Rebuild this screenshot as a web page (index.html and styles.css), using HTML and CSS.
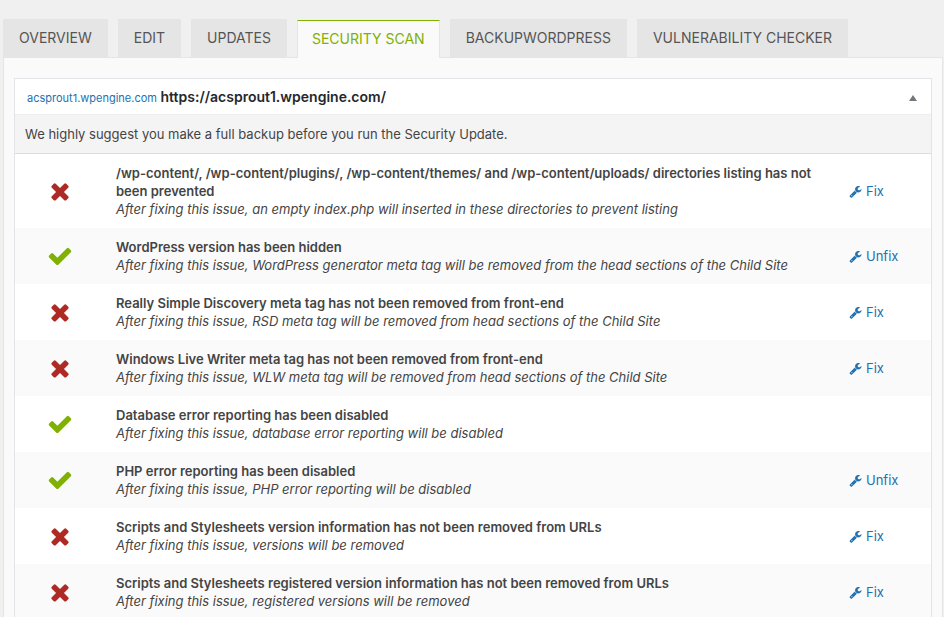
FILE: index.html
```html
<!DOCTYPE html>
<html lang="en">
<head>
  <meta charset="UTF-8">
  <meta name="viewport" content="width=device-width, initial-scale=1.0">
  <title>Security Scan</title>
  <link rel="stylesheet" href="styles.css">
</head>
<body>
  <svg class="sprite" aria-hidden="true">
    <symbol id="icon-check" viewBox="0 0 1792 1792">
      <path d="M1671 566q0 40-28 68l-724 724-136 136q-28 28-68 28t-68-28l-136-136-362-362q-28-28-28-68t28-68l136-136q28-28 68-28t68 28l294 295 656-657q28-28 68-28t68 28l136 136q28 28 28 68z"/>
    </symbol>
    <symbol id="icon-times" viewBox="0 0 1792 1792">
      <path d="M1490 1322q0 40-28 68l-136 136q-28 28-68 28t-68-28l-294-294-294 294q-28 28-68 28t-68-28l-136-136q-28-28-28-68t28-68l294-294-294-294q-28-28-28-68t28-68l136-136q28-28 68-28t68 28l294 294 294-294q28-28 68-28t68 28l136 136q28 28 28 68t-28 68l-294 294 294 294q28 28 28 68z"/>
    </symbol>
    <symbol id="icon-wrench" viewBox="0 0 1792 1792">
      <path d="M448 1472q0-26-19-45t-45-19-45 19-19 45 19 45 45 19 45-19 19-45zm644-420l-682 682q-37 37-90 37-52 0-91-37l-106-108q-38-36-38-90 0-53 38-91l681-681q39 98 114.500 173.500t173.500 114.500zm634-435q0 39-23 106-47 134-164.500 217.500t-258.500 83.500q-185 0-316.500-131.500t-131.500-316.500 131.500-316.500 316.500-131.500q58 0 121.500 16.500t107.500 46.500q16 11 16 28t-16 28l-293 169v224l193 107q5-3 79-48.500t135.500-81 70.500-35.500q15 0 23.500 10t8.500 25z"/>
    </symbol>
  </svg>

  <nav class="tabs">
    <a class="tab" href="#overview">OVERVIEW</a>
    <a class="tab" href="#edit">EDIT</a>
    <a class="tab" href="#updates">UPDATES</a>
    <a class="tab active" href="#scan" aria-current="page">SECURITY SCAN</a>
    <a class="tab" href="#backup">BACKUPWORDPRESS</a>
    <a class="tab" href="#vulnerability">VULNERABILITY CHECKER</a>
  </nav>

  <main class="panel">
    <section class="postbox">
      <div class="postbox-header">
        <h2><a href="#site">acsprout1.wpengine.com</a> https://acsprout1.wpengine.com/</h2>
        <button class="toggle" type="button" aria-label="Toggle panel">
          <svg viewBox="0 0 8 6"><path d="M4 0L8 6H0z"/></svg>
        </button>
      </div>
      <p class="notice">We highly suggest you make a full backup before you run the Security Update.</p>
      <table class="issues">
        <tbody>
          <tr>
            <td class="status bad"><svg><use href="#icon-times"/></svg></td>
            <td class="desc"><strong>/wp-content/, /wp-content/plugins/, /wp-content/themes/ and /wp-content/uploads/ directories listing has not been prevented</strong><em>After fixing this issue, an empty index.php will inserted in these directories to prevent listing</em></td>
            <td class="action"><a href="#fix"><svg><use href="#icon-wrench"/></svg>Fix</a></td>
          </tr>
          <tr>
            <td class="status good"><svg><use href="#icon-check"/></svg></td>
            <td class="desc"><strong>WordPress version has been hidden</strong><em>After fixing this issue, WordPress generator meta tag will be removed from the head sections of the Child Site</em></td>
            <td class="action"><a href="#unfix"><svg><use href="#icon-wrench"/></svg>Unfix</a></td>
          </tr>
          <tr>
            <td class="status bad"><svg><use href="#icon-times"/></svg></td>
            <td class="desc"><strong>Really Simple Discovery meta tag has not been removed from front-end</strong><em>After fixing this issue, RSD meta tag will be removed from head sections of the Child Site</em></td>
            <td class="action"><a href="#fix"><svg><use href="#icon-wrench"/></svg>Fix</a></td>
          </tr>
          <tr>
            <td class="status bad"><svg><use href="#icon-times"/></svg></td>
            <td class="desc"><strong>Windows Live Writer meta tag has not been removed from front-end</strong><em>After fixing this issue, WLW meta tag will be removed from head sections of the Child Site</em></td>
            <td class="action"><a href="#fix"><svg><use href="#icon-wrench"/></svg>Fix</a></td>
          </tr>
          <tr>
            <td class="status good"><svg><use href="#icon-check"/></svg></td>
            <td class="desc"><strong>Database error reporting has been disabled</strong><em>After fixing this issue, database error reporting will be disabled</em></td>
            <td class="action"></td>
          </tr>
          <tr>
            <td class="status good"><svg><use href="#icon-check"/></svg></td>
            <td class="desc"><strong>PHP error reporting has been disabled</strong><em>After fixing this issue, PHP error reporting will be disabled</em></td>
            <td class="action"><a href="#unfix"><svg><use href="#icon-wrench"/></svg>Unfix</a></td>
          </tr>
          <tr>
            <td class="status bad"><svg><use href="#icon-times"/></svg></td>
            <td class="desc"><strong>Scripts and Stylesheets version information has not been removed from URLs</strong><em>After fixing this issue, versions will be removed</em></td>
            <td class="action"><a href="#fix"><svg><use href="#icon-wrench"/></svg>Fix</a></td>
          </tr>
          <tr>
            <td class="status bad"><svg><use href="#icon-times"/></svg></td>
            <td class="desc"><strong>Scripts and Stylesheets registered version information has not been removed from URLs</strong><em>After fixing this issue, registered versions will be removed</em></td>
            <td class="action"><a href="#fix"><svg><use href="#icon-wrench"/></svg>Fix</a></td>
          </tr>
        </tbody>
      </table>
    </section>
  </main>
</body>
</html>
```
FILE: styles.css
```css
* {
  box-sizing: border-box;
}
body {
  margin: 0;
  padding: 19px 1px 0 3px;
  background: #f0f0f0;
  color: #444;
  font-family: Inter, "Liberation Sans", sans-serif;
  font-size: 13px;
  line-height: 18px;
}
a {
  color: #2271b1;
  text-decoration: none;
}
svg {
  fill: currentColor;
}
.sprite {
  display: none;
}

/* tabs */
.tabs {
  display: flex;
  align-items: flex-end;
  gap: 10px;
  height: 38px;
}
.tab {
  height: 38px;
  padding: 0 16px;
  background: #e5e5e5;
  color: #555;
  font-size: 14px;
  line-height: 38px;
  white-space: nowrap;
}
/* covers the top border of the panel */
.tab.active {
  margin-bottom: -1px;
  padding: 0 14px;
  border: 1px solid #e5e5e5;
  border-top-color: #7fb100;
  border-bottom: 0;
  background: #fafafa;
  color: #7fb100;
  line-height: 36px;
  z-index: 1;
}

/* panel */
.panel {
  padding: 20px 10px 0;
  border: 1px solid #e5e5e5;
  background: #fafafa;
}
.postbox {
  border: 1px solid #e2e4e7;
  background: #fff;
}
.postbox-header {
  display: flex;
  align-items: center;
  justify-content: space-between;
  height: 36px;
  padding: 2px 12px 0;
  border-bottom: 1px solid #eee;
}
.postbox-header h2 {
  margin: 0;
  color: #23282d;
  font-size: 14px;
  font-weight: 600;
}
.postbox-header h2 a {
  font-size: 11px;
  font-weight: 400;
}
.toggle {
  display: flex;
  padding: 2px;
  border: 0;
  background: none;
  color: #72777c;
}
.toggle svg {
  width: 8px;
  height: 6px;
}
.notice {
  margin: 0;
  padding: 10px;
  border-bottom: 1px solid #ddd;
  background: #f4f4f4;
}

/* issues */
.issues {
  width: 100%;
  border-collapse: collapse;
}
.issues tr:nth-child(even) {
  background: #fafafa;
}
.issues td {
  padding: 10px 0;
}
.issues .status {
  width: 90px;
  text-align: center;
}
.status svg {
  display: block;
  width: 26px;
  height: 26px;
  margin: 0 auto;
}
.good {
  color: #7fb100;
}
.bad {
  color: #ad2b24;
}
.issues .desc {
  padding: 10px 20px 10px 11px;
}
.desc strong,
.desc em {
  display: block;
}
.desc strong {
  font-weight: 600;
}
.issues .action {
  width: 82px;
}
.action a {
  display: flex;
  align-items: center;
  gap: 4px;
}
.action svg {
  width: 13px;
  height: 13px;
}
```
